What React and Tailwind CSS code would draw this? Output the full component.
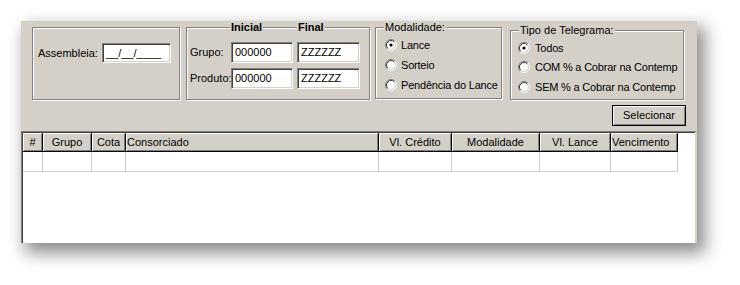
import React from "react";

const columns = [
  { label: "#", width: "w-[20px]", align: "justify-center" },
  { label: "Grupo", width: "w-[49px]", align: "justify-center" },
  { label: "Cota", width: "w-[34px]", align: "justify-center" },
  { label: "Consorciado", width: "w-[253px]", align: "justify-start pl-[1px]" },
  { label: "Vl. Crédito", width: "w-[73px]", align: "justify-center" },
  { label: "Modalidade", width: "w-[88px]", align: "justify-center" },
  { label: "Vl. Lance", width: "w-[71px]", align: "justify-center" },
  { label: "Vencimento", width: "w-[67px]", align: "justify-start pl-[1px]" },
];

// classic win9x radio button
const Radio = ({ checked }) => (
  <svg width="12" height="12" viewBox="0 0 12 12" className="shrink-0">
    <circle cx="6" cy="6" r="4.5" fill="#fff" />
    <path d="M2.11 9.89 A5.5 5.5 0 0 1 9.89 2.11" fill="none" stroke="#808080" strokeWidth="1" />
    <path d="M9.89 2.11 A5.5 5.5 0 0 1 2.11 9.89" fill="none" stroke="#ffffff" strokeWidth="1" />
    <path d="M2.82 9.18 A4.5 4.5 0 0 1 9.18 2.82" fill="none" stroke="#404040" strokeWidth="1" />
    <path d="M9.18 2.82 A4.5 4.5 0 0 1 2.82 9.18" fill="none" stroke="#d4d0c8" strokeWidth="1" />
    {checked && <circle cx="6" cy="6" r="1.6" fill="#000" />}
  </svg>
);

const Field = ({ value, width }) => (
  <div
    className={`${width} h-full bg-white border border-t-[#808080] border-l-[#808080] border-b-white border-r-white shadow-[inset_1px_1px_0_#404040,inset_-1px_-1px_0_#d4d0c8] flex items-center pl-[3px] leading-none`}
  >
    {value}
  </div>
);

const GroupBox = ({ className, children }) => (
  <div
    className={`relative border border-[#808080] shadow-[inset_1px_1px_0_#fff,1px_1px_0_#fff] ${className}`}
  >
    {children}
  </div>
);

const Legend = ({ className, children }) => (
  <span className={`absolute top-[-7px] bg-[#d4d0c8] px-[1px] leading-[13px] ${className}`}>
    {children}
  </span>
);

export default function App() {
  return (
    <div className="w-[740px] h-[285px] bg-white overflow-hidden text-[11px] text-black font-['Liberation_Sans',Arial,sans-serif]">
      <div className="ml-[21px] mt-[21px] w-[676px] h-[222px] bg-[#d4d0c8] shadow-[6px_8px_16px_2px_rgba(0,0,0,0.45)] flex flex-col">
        {/* filters */}
        <div className="flex items-start pt-[6px]">
          <GroupBox className="ml-[11px] w-[148px] h-[73px]">
            <div className="flex items-center h-[20px] mt-[15px] pl-[5px]">
              <span className="w-[64px]">Assembleia:</span>
              <Field value="__/__/____" width="w-[69px]" />
            </div>
          </GroupBox>

          <GroupBox className="ml-[6px] w-[184px] h-[73px]">
            <Legend className="left-[43px] font-bold">Inicial</Legend>
            <Legend className="left-[110px] font-bold">Final</Legend>
            <div className="flex flex-col gap-[5px] mt-[14px] pl-[3px]">
              <div className="flex items-center h-[21px]">
                <span className="w-[41px]">Grupo:</span>
                <Field value="000000" width="w-[62px]" />
                <div className="w-[4px]" />
                <Field value="ZZZZZZ" width="w-[63px]" />
              </div>
              <div className="flex items-center h-[21px]">
                <span className="w-[41px]">Produto:</span>
                <Field value="000000" width="w-[62px]" />
                <div className="w-[4px]" />
                <Field value="ZZZZZZ" width="w-[63px]" />
              </div>
            </div>
          </GroupBox>

          <GroupBox className="ml-[5px] w-[127px] h-[72px]">
            <Legend className="left-[8px]">Modalidade:</Legend>
            <div className="flex flex-col pt-[7px] pl-[9px]">
              {[["Lance", true], ["Sorteio", false], ["Pendência do Lance", false]].map(([t, c]) => (
                <div key={t} className="flex items-center gap-[4px] h-[20px] whitespace-nowrap tracking-[-0.2px]">
                  <Radio checked={c} />
                  <span>{t}</span>
                </div>
              ))}
            </div>
          </GroupBox>

          <GroupBox className="ml-[8px] mt-[3px] w-[174px] h-[70px]">
            <Legend className="left-[8px]">Tipo de Telegrama:</Legend>
            <div className="flex flex-col pt-[7px] pl-[7px]">
              {[
                ["Todos", true],
                ["COM % a Cobrar na Contemp", false],
                ["SEM % a Cobrar na Contemp", false],
              ].map(([t, c]) => (
                <div key={t} className="flex items-center gap-[5px] h-[19.5px] whitespace-nowrap tracking-[-0.2px]">
                  <Radio checked={c} />
                  <span>{t}</span>
                </div>
              ))}
            </div>
          </GroupBox>
        </div>

        {/* action */}
        <div className="flex justify-end pr-[11px] mt-[5px]">
          <button className="w-[74px] h-[21px] border border-black bg-[#d4d0c8] shadow-[inset_1px_1px_0_#fff,inset_-1px_-1px_0_#808080] flex items-center justify-center leading-none">
            Selecionar
          </button>
        </div>

        {/* grid */}
        <div className="flex-1 mt-[5px] bg-white border-t border-l border-t-[#808080] border-l-[#808080] border-r-2 border-r-[#d4d0c8] shadow-[inset_1px_1px_0_#404040] pt-[1px] pl-[1px] overflow-hidden">
          <div className="flex h-[19px]">
            {columns.map((c) => (
              <div
                key={c.label}
                className={`${c.width} h-full flex items-center ${c.align} bg-[#d4d0c8] border-r border-b border-[#000] shadow-[inset_1px_1px_0_#fff,inset_-1px_-1px_0_#808080] whitespace-nowrap`}
              >
                {c.label}
              </div>
            ))}
          </div>
          <div className="flex h-[20px]">
            {columns.map((c) => (
              <div key={c.label} className={`${c.width} h-full border-r border-b border-[#cfcfcf]`} />
            ))}
          </div>
        </div>
      </div>
    </div>
  );
}
